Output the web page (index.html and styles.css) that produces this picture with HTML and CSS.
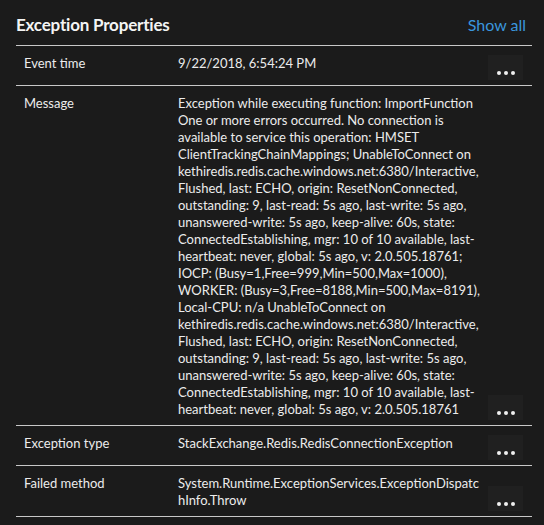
FILE: index.html
```html
<!DOCTYPE html>
<html>
<head>
<meta charset="utf-8">
<link rel="stylesheet" href="styles.css">
</head>
<body>
<div class="panel">
  <div class="header">
    <h2 class="title">Exception Properties</h2>
    <a class="show-all">Show all</a>
  </div>
  <div class="row">
    <div class="label">Event time</div>
    <div class="value">9/22/2018, 6:54:24 PM</div>
    <button class="more"><span></span><span></span><span></span></button>
  </div>
  <div class="row">
    <div class="label">Message</div>
    <div class="value">Exception while executing function: ImportFunction<br>One or more errors occurred. No connection is<br>available to service this operation: HMSET<br>ClientTrackingChainMappings; UnableToConnect on<br>kethiredis.redis.cache.windows.net:6380/Interactive,<br>Flushed, last: ECHO, origin: ResetNonConnected,<br>outstanding: 9, last-read: 5s ago, last-write: 5s ago,<br>unanswered-write: 5s ago, keep-alive: 60s, state:<br>ConnectedEstablishing, mgr: 10 of 10 available, last-<br>heartbeat: never, global: 5s ago, v: 2.0.505.18761;<br>IOCP: (Busy=1,Free=999,Min=500,Max=1000),<br>WORKER: (Busy=3,Free=8188,Min=500,Max=8191),<br>Local-CPU: n/a UnableToConnect on<br>kethiredis.redis.cache.windows.net:6380/Interactive,<br>Flushed, last: ECHO, origin: ResetNonConnected,<br>outstanding: 9, last-read: 5s ago, last-write: 5s ago,<br>unanswered-write: 5s ago, keep-alive: 60s, state:<br>ConnectedEstablishing, mgr: 10 of 10 available, last-<br>heartbeat: never, global: 5s ago, v: 2.0.505.18761</div>
    <button class="more"><span></span><span></span><span></span></button>
  </div>
  <div class="row">
    <div class="label">Exception type</div>
    <div class="value">StackExchange.Redis.RedisConnectionException</div>
    <button class="more"><span></span><span></span><span></span></button>
  </div>
  <div class="row">
    <div class="label">Failed method</div>
    <div class="value">System.Runtime.ExceptionServices.ExceptionDispatc<br>hInfo.Throw</div>
    <button class="more"><span></span><span></span><span></span></button>
  </div>
</div>
</body>
</html>
```

FILE: styles.css
```css
html, body {
  margin: 0;
  padding: 0;
  background: #1b1b1b;
}
body {
  font-family: Lato, "Open Sans", sans-serif;
  color: #ececec;
  width: 544px;
  height: 525px;
  overflow: hidden;
}
.panel {
  margin: 0 12px 0 16px;
}
.header {
  display: flex;
  align-items: center;
  justify-content: space-between;
  height: 46px;
  padding-top: 3px;
  box-sizing: border-box;
  border-bottom: 1px solid #c8c8c8;
}
.title {
  margin: 0;
  font-size: 17px;
  letter-spacing: -0.2px;
  font-weight: 700;
  color: #f4f4f4;
}
.show-all {
  color: #3a96dd;
  font-size: 16px;
  padding-right: 6px;
  cursor: pointer;
}
.row {
  display: flex;
  align-items: flex-start;
  padding: 9px 0 7px;
  border-bottom: 1px solid #c8c8c8;
  font-size: 13px;
  line-height: 17px;
}
.label {
  width: 154px;
  padding-left: 8px;
  flex: none;
}
.value {
  flex: 1;
  white-space: nowrap;
}
.more {
  align-self: flex-end;
  flex: none;
  width: 35px;
  height: 25px;
  margin: 0 9px -2px 0;
  padding: 0 0 5px;
  border: 0;
  background: #202020;
  display: flex;
  align-items: flex-end;
  justify-content: center;
  gap: 3px;
}
.more span {
  width: 4px;
  height: 4px;
  border-radius: 50%;
  background: #f0f0f0;
}
```
